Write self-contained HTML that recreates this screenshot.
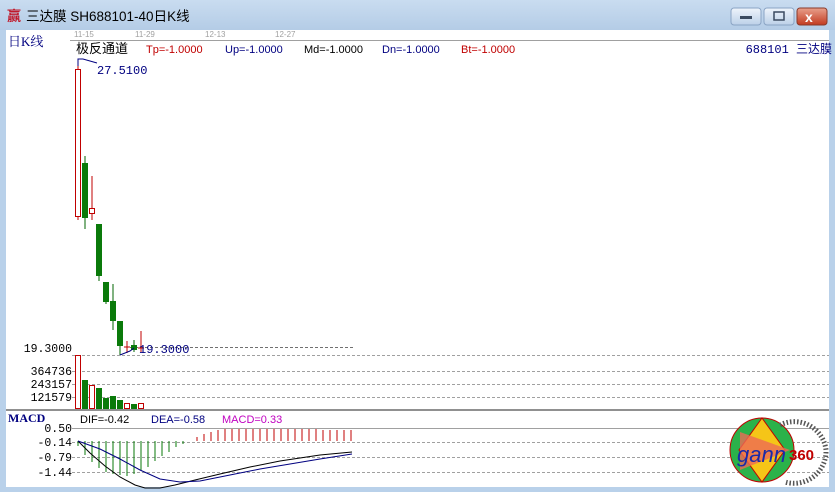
<!DOCTYPE html>
<html><head><meta charset="utf-8"><style>
html,body{margin:0;padding:0;width:835px;height:492px;overflow:hidden;background:#b9d1ea}
svg{display:block}
text{font-family:"Liberation Sans","Noto Sans CJK SC",sans-serif}
.m, .m text{font-family:"Liberation Mono","Noto Sans CJK SC",monospace}
.s{font-family:"Liberation Serif","Noto Serif CJK SC",serif}
</style></head><body>
<svg width="835" height="492" xmlns="http://www.w3.org/2000/svg">
<defs>
<linearGradient id="tb" x1="0" y1="0" x2="0" y2="1"><stop offset="0" stop-color="#c9dcf0"/><stop offset="1" stop-color="#b4cce6"/></linearGradient>
<linearGradient id="bt" x1="0" y1="0" x2="0" y2="1"><stop offset="0" stop-color="#eef4fb"/><stop offset="1" stop-color="#bcd0e8"/></linearGradient>
<linearGradient id="cl" x1="0" y1="0" x2="0" y2="1"><stop offset="0" stop-color="#e8a08c"/><stop offset="1" stop-color="#c23a20"/></linearGradient>
</defs>
<rect width="835" height="492" fill="#b9d1ea"/>
<rect width="835" height="30" fill="url(#tb)"/>
<text x="7" y="21" font-size="14" fill="#c0182a" font-weight="bold">赢</text>
<text x="26" y="21" font-size="13.5" fill="#000">三达膜  SH688101-40日K线</text>
<rect x="731" y="8" width="30" height="17" rx="3" fill="url(#bt)" stroke="#8aa4c4"/>
<rect x="740" y="16" width="12" height="3" fill="#3a4a60"/>
<rect x="764" y="8" width="30" height="17" rx="3" fill="url(#bt)" stroke="#8aa4c4"/>
<rect x="774" y="12" width="10" height="8" fill="none" stroke="#3a4a60" stroke-width="1.5"/>
<rect x="797" y="8" width="30" height="17" rx="3" fill="url(#cl)" stroke="#8a3a2a"/>
<text x="805" y="22" font-size="14" fill="#fff" font-weight="bold">x</text>
<rect x="6" y="30" width="823" height="457" fill="#fff"/>
<line x1="70" y1="40.5" x2="829" y2="40.5" stroke="#a0a0a0"/>
<g font-size="8" fill="#a0a0a0"><text x="74" y="37">11-15</text><text x="135" y="37">11-29</text><text x="205" y="37">12-13</text><text x="275" y="37">12-27</text></g>
<text x="8" y="46" font-size="13" fill="#000080" class="s">日K线</text>
<text x="76" y="53" font-size="13" fill="#000">极反通道</text>
<g font-size="11"><text x="146" y="53" fill="#c00000">Tp=-1.0000</text><text x="225" y="53" fill="#000080">Up=-1.0000</text><text x="304" y="53" fill="#000">Md=-1.0000</text><text x="382" y="53" fill="#000080">Dn=-1.0000</text><text x="461" y="53" fill="#c00000">Bt=-1.0000</text></g>
<text x="832" y="53" font-size="12" fill="#000080" text-anchor="end" class="m">688101 三达膜</text>
<polyline points="78,66 78,59 83,59 97,63" fill="none" stroke="#000080"/>
<text x="97" y="74" font-size="12" fill="#000080" class="m">27.5100</text>
<g stroke="#a0a0a0" stroke-dasharray="3,2">
<line x1="72" y1="355.5" x2="829" y2="355.5"/><line x1="72" y1="371.5" x2="829" y2="371.5"/><line x1="72" y1="384.5" x2="829" y2="384.5"/><line x1="72" y1="397.5" x2="829" y2="397.5"/>
<line x1="72" y1="442.5" x2="829" y2="442.5"/><line x1="72" y1="457.5" x2="829" y2="457.5"/><line x1="72" y1="472.5" x2="829" y2="472.5"/>
<line x1="130" y1="347.5" x2="354" y2="347.5" stroke="#707070"/>
</g>
<line x1="72" y1="428.5" x2="829" y2="428.5" stroke="#a0a0a0"/>
<line x1="6" y1="410" x2="829" y2="410" stroke="#909090" stroke-width="2"/>
<g font-size="11.5" fill="#000" class="m" text-anchor="end">
<text x="72" y="352">19.3000</text><text x="72" y="375">364736</text><text x="72" y="388">243157</text><text x="72" y="401">121579</text>
<text x="72" y="432">0.50</text><text x="72" y="446">-0.14</text><text x="72" y="461">-0.79</text><text x="72" y="476">-1.44</text>
</g>
<g stroke-width="1">
<line x1="78" y1="66" x2="78" y2="220" stroke="#c00000"/>
<rect x="75.5" y="69.5" width="5" height="147" fill="#fff" stroke="#c00000"/>
<line x1="85" y1="156" x2="85" y2="229" stroke="#006400"/><rect x="82" y="163" width="6" height="55" fill="#0a7a0a"/>
<line x1="92" y1="176" x2="92" y2="220" stroke="#c00000"/><rect x="89.5" y="208.5" width="5" height="5" fill="#fff" stroke="#c00000"/>
<line x1="99" y1="224" x2="99" y2="281" stroke="#006400"/><rect x="96" y="224" width="6" height="52" fill="#0a7a0a"/>
<line x1="106" y1="282" x2="106" y2="304" stroke="#006400"/><rect x="103" y="282" width="6" height="20" fill="#0a7a0a"/>
<line x1="113" y1="284" x2="113" y2="330" stroke="#006400"/><rect x="110" y="301" width="6" height="20" fill="#0a7a0a"/>
<line x1="120" y1="321" x2="120" y2="355" stroke="#006400"/><rect x="117" y="321" width="6" height="25" fill="#0a7a0a"/>
<line x1="127" y1="341" x2="127" y2="353" stroke="#c00000"/><line x1="124" y1="347" x2="130" y2="347" stroke="#c00000"/>
<line x1="134" y1="340" x2="134" y2="352" stroke="#006400"/><rect x="131" y="345" width="6" height="5" fill="#0a7a0a"/>
<line x1="141" y1="331" x2="141" y2="352" stroke="#c00000"/><line x1="138" y1="348" x2="144" y2="348" stroke="#c00000"/>
</g>
<polyline points="120,355 130,351 134,348" fill="none" stroke="#000080"/>
<text x="139" y="353" font-size="12" fill="#000080" class="m">19.3000</text>
<rect x="75.5" y="355.5" width="5" height="53" fill="#fff" stroke="#c00000"/>
<rect x="82" y="380" width="6" height="29" fill="#0a7a0a"/>
<rect x="89.5" y="385.5" width="5" height="23" fill="#fff" stroke="#c00000"/>
<rect x="96" y="388" width="6" height="21" fill="#0a7a0a"/>
<rect x="103" y="398" width="6" height="11" fill="#0a7a0a"/>
<rect x="110" y="396" width="6" height="13" fill="#0a7a0a"/>
<rect x="117" y="400" width="6" height="9" fill="#0a7a0a"/>
<rect x="124.5" y="403.5" width="5" height="5" fill="#fff" stroke="#c00000"/>
<rect x="131" y="404" width="6" height="5" fill="#0a7a0a"/>
<rect x="138.5" y="403.5" width="5" height="5" fill="#fff" stroke="#c00000"/>
<text x="8" y="422" font-size="12" fill="#000080" class="s" font-weight="bold">MACD</text>
<g font-size="11"><text x="80" y="423" fill="#000">DIF=-0.42</text><text x="151" y="423" fill="#000080">DEA=-0.58</text><text x="222" y="423" fill="#c000c0">MACD=0.33</text></g>
<g stroke="#0a7a0a">
<line x1="78" y1="441" x2="78" y2="446"/><line x1="85" y1="441" x2="85" y2="455"/><line x1="92" y1="441" x2="92" y2="462"/><line x1="99" y1="441" x2="99" y2="468"/><line x1="106" y1="441" x2="106" y2="472"/><line x1="113" y1="441" x2="113" y2="474"/><line x1="120" y1="441" x2="120" y2="475"/><line x1="127" y1="441" x2="127" y2="476"/><line x1="134" y1="441" x2="134" y2="474"/><line x1="141" y1="441" x2="141" y2="470"/><line x1="148" y1="441" x2="148" y2="467"/><line x1="155" y1="441" x2="155" y2="461"/><line x1="162" y1="441" x2="162" y2="456"/><line x1="169" y1="441" x2="169" y2="452"/><line x1="176" y1="441" x2="176" y2="447"/><line x1="183" y1="441" x2="183" y2="444"/>
</g>
<g stroke="#c00000">
<line x1="197" y1="441" x2="197" y2="437"/><line x1="204" y1="441" x2="204" y2="434"/><line x1="211" y1="441" x2="211" y2="432"/><line x1="218" y1="441" x2="218" y2="430"/>
<line x1="225" y1="441" x2="225" y2="429"/><line x1="232" y1="441" x2="232" y2="429"/><line x1="239" y1="441" x2="239" y2="429"/><line x1="246" y1="441" x2="246" y2="429"/><line x1="253" y1="441" x2="253" y2="429"/><line x1="260" y1="441" x2="260" y2="429"/><line x1="267" y1="441" x2="267" y2="429"/><line x1="274" y1="441" x2="274" y2="429"/><line x1="281" y1="441" x2="281" y2="429"/><line x1="288" y1="441" x2="288" y2="429"/><line x1="295" y1="441" x2="295" y2="429"/><line x1="302" y1="441" x2="302" y2="429"/><line x1="309" y1="441" x2="309" y2="429"/><line x1="316" y1="441" x2="316" y2="429"/><line x1="323" y1="441" x2="323" y2="430"/><line x1="330" y1="441" x2="330" y2="430"/><line x1="337" y1="441" x2="337" y2="430"/><line x1="344" y1="441" x2="344" y2="430"/><line x1="351" y1="441" x2="351" y2="430"/>
</g>
<path d="M78,441 L90,453 L105,466 L120,477 L135,485 L145,488 L160,488 L175,485 L195,480 L220,474 L250,467 L280,461 L320,455 L352,452" fill="none" stroke="#000"/>
<path d="M78,441 L100,449 L120,459 L140,470 L160,479 L180,482 L200,481 L230,475 L260,469 L290,464 L320,459 L352,454" fill="none" stroke="#000080"/>
<g>
<circle cx="762" cy="450" r="32" fill="#2bb24a" stroke="#c00000"/>
<polygon points="762,418 785,450 762,482 739,450" fill="#f5c518" stroke="#c00000"/>
<polygon points="740,432 790,450 740,470" fill="#ee6a55" opacity="0.8"/>
<text x="737" y="462" font-size="22" font-style="italic" fill="#1a2aa8" font-family="Liberation Serif,serif">gann</text>
<text x="789" y="460" font-size="15" font-weight="bold" fill="#c00000">360</text>
<path d="M780,425 A32,32 0 0 1 826,450" fill="none" stroke="#555" stroke-width="5" stroke-dasharray="1.5,2"/>
<path d="M826,452 A32,32 0 0 1 785,482" fill="none" stroke="#555" stroke-width="5" stroke-dasharray="1.5,2"/>
</g>
</svg>
</body></html>
